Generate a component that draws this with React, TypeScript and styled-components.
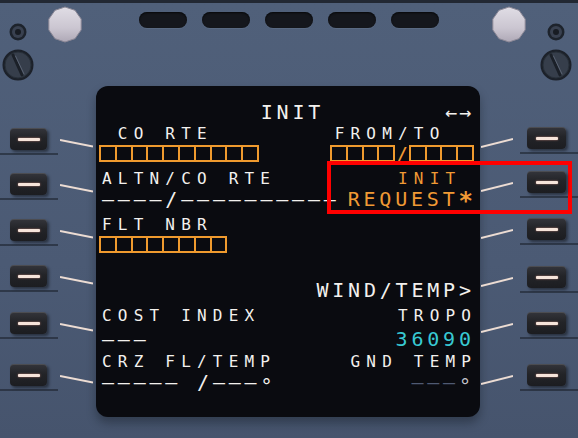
import styled, { createGlobalStyle } from "styled-components";

type Tone = "white" | "amber" | "cyan" | "dim" | "grey";

const TONES: Record<Tone, string> = {
    white: "#f3f1ee",
    amber: "#f09a35",
    cyan: "#38c9d3",
    dim: "#4f5a72",
    grey: "#c4c4cc"
};

const SMALL = { size: 16, spacing: 6.2 };
const LARGE = { size: 20, spacing: 3.8 };

const GlobalStyle = createGlobalStyle`
    html, body {
        margin: 0;
        padding: 0;
        background: #4c5b75;
    }
    body {
        width: 578px;
        height: 438px;
        overflow: hidden;
        font-family: "DejaVu Sans Mono", "Liberation Mono", monospace;
    }
`;

const Panel = styled.div`
    position: relative;
    width: 578px;
    height: 438px;
    display: grid;
    grid-template-columns: 96px 384px 98px;
    grid-template-rows: 86px 331px 21px;
    background: linear-gradient(180deg, #222833 0, #222833 3px, #50607a 3px, #4b5a74 60%, #46546d 100%);
    overflow: hidden;
`;

/* ---------- top hardware ---------- */

const Header = styled.div`
    grid-column: 1 / -1;
    display: grid;
    grid-template-columns: 1fr auto 1fr;
    align-items: start;
`;

const Hardware = styled.div<{ $side: "left" | "right" }>`
    display: flex;
    align-items: flex-start;
    gap: 12px;
    justify-content: ${(p) => (p.$side === "left" ? "flex-start" : "flex-end")};
    padding: ${(p) => (p.$side === "left" ? "0 0 0 1px" : "0 5px 0 0")};
`;

const ScrewStack = styled.div`
    width: 34px;
    display: flex;
    flex-direction: column;
    align-items: center;
    gap: 8px;
    padding-top: 23px;
`;

const NutWrap = styled.div`
    margin-top: 6px;
    width: 36px;
    height: 37px;
`;

const Pills = styled.div`
    display: flex;
    gap: 15px;
    margin-top: 12px;
`;

const Pill = styled.span`
    width: 48px;
    height: 16px;
    border-radius: 8px;
    background: #15171d;
    box-shadow: inset 0 1px 2px rgba(0, 0, 0, 0.7), 0 1px 0 rgba(120, 135, 160, 0.25);
`;

function Nut() {
    const pts = Array.from({ length: 10 }, (_, i) => {
        const a = (Math.PI * 2 * i) / 10 + Math.PI / 10;
        return `${18 + 17 * Math.cos(a)},${18.5 + 17.5 * Math.sin(a)}`;
    }).join(" ");
    return (
        <NutWrap>
            <svg width="36" height="37" viewBox="0 0 36 37">
                <defs>
                    <linearGradient id="nutg" x1="0" y1="0" x2="0" y2="1">
                        <stop offset="0" stopColor="#e0dde5" />
                        <stop offset="0.6" stopColor="#cbc6d1" />
                        <stop offset="1" stopColor="#aea8b6" />
                    </linearGradient>
                </defs>
                <polygon points={pts} fill="url(#nutg)" stroke="#8c8896" strokeWidth="1" strokeLinejoin="round" />
            </svg>
        </NutWrap>
    );
}

function SmallScrew() {
    return (
        <svg width="18" height="18" viewBox="0 0 18 18">
            <circle cx="9" cy="9" r="8.5" fill="#1d232c" />
            <circle cx="9" cy="9" r="6" fill="#394150" />
            <circle cx="9" cy="9" r="3" fill="#181c23" />
        </svg>
    );
}

function Bolt() {
    return (
        <svg width="32" height="32" viewBox="0 0 32 32">
            <circle cx="16" cy="16" r="15.5" fill="#1c212a" />
            <circle cx="16" cy="16" r="13" fill="#363e4b" stroke="#283039" strokeWidth="1" />
            <line x1="11" y1="6" x2="20" y2="26" stroke="#1b2028" strokeWidth="3" strokeLinecap="round" />
            <line x1="13.5" y1="7" x2="22" y2="25" stroke="#5a6373" strokeWidth="1" strokeLinecap="round" />
        </svg>
    );
}

/* ---------- line select keys ---------- */

const KeyColumn = styled.div<{ $side: "left" | "right" }>`
    grid-row: 2;
    grid-column: ${(p) => (p.$side === "left" ? 1 : 3)};
    display: flex;
    flex-direction: column;
`;

const KeyRow = styled.div<{ $side: "left" | "right"; $top: number }>`
    position: relative;
    display: flex;
    align-items: center;
    height: 22px;
    margin-top: ${(p) => p.$top}px;
    gap: ${(p) => (p.$side === "left" ? 13 : 14)}px;
    padding-left: ${(p) => (p.$side === "left" ? 10 : 1)}px;

    &::after {
        content: "";
        position: absolute;
        ${(p) => (p.$side === "left" ? "left: 0;" : "right: 0;")}
        bottom: -5px;
        width: 58px;
        height: 2px;
        background: rgba(24, 29, 38, 0.55);
    }
`;

const Key = styled.span<{ $w: number }>`
    position: relative;
    z-index: 1;
    width: ${(p) => p.$w}px;
    height: 22px;
    border-radius: 4px;
    background: linear-gradient(180deg, #34353b 0%, #232428 45%, #1c1d21 100%);
    box-shadow: inset 0 1px 0 rgba(255, 255, 255, 0.12), 2px 2px 3px rgba(0, 0, 0, 0.45);
    display: flex;
    align-items: center;
    justify-content: center;
`;

const KeyMark = styled.span`
    width: 22px;
    height: 3px;
    border-radius: 1px;
    background: #f6e4da;
    box-shadow: 0 0 2px rgba(255, 170, 150, 0.7);
`;

function Leader({ side }: { side: "left" | "right" }) {
    return side === "left" ? (
        <svg width="33" height="22" viewBox="0 0 33 22">
            <line x1="0" y1="12" x2="33" y2="18.5" stroke="#ecdcd3" strokeWidth="2" />
        </svg>
    ) : (
        <svg width="32" height="22" viewBox="0 0 32 22">
            <line x1="0" y1="20" x2="32" y2="12" stroke="#ecdcd3" strokeWidth="2" />
        </svg>
    );
}

const LEFT_KEYS = [53, 98, 144, 190, 237, 289];
const RIGHT_KEYS = [52, 96, 143, 191, 237, 289];

function Keys({ side }: { side: "left" | "right" }) {
    const centers = side === "left" ? LEFT_KEYS : RIGHT_KEYS;
    return (
        <KeyColumn $side={side}>
            {centers.map((c, i) => (
                <KeyRow key={i} $side={side} $top={i === 0 ? c - 11 : c - centers[i - 1] - 22}>
                    {side === "left" ? (
                        <>
                            <Key $w={37}>
                                <KeyMark />
                            </Key>
                            <Leader side="left" />
                        </>
                    ) : (
                        <>
                            <Leader side="right" />
                            <Key $w={39}>
                                <KeyMark />
                            </Key>
                        </>
                    )}
                </KeyRow>
            ))}
        </KeyColumn>
    );
}

/* ---------- display ---------- */

const Screen = styled.div`
    grid-row: 2;
    grid-column: 2;
    background: #0a0b10;
    border-radius: 12px;
    padding: 16px 9px 0 6px;
    display: flex;
    flex-direction: column;
    box-shadow: 0 6px 10px rgba(12, 16, 24, 0.35);
`;

const Line = styled.div<{ $gap: number }>`
    display: flex;
    justify-content: space-between;
    align-items: center;
    height: 20px;
    margin-top: ${(p) => p.$gap}px;
`;

const TitleLine = styled(Line)`
    display: grid;
    grid-template-columns: 1fr auto 1fr;
`;

const Txt = styled.span<{ $small?: boolean; $tone?: Tone; $end?: boolean }>`
    font-family: "DejaVu Sans Mono", "Liberation Mono", monospace;
    font-size: ${(p) => (p.$small ? SMALL.size : LARGE.size)}px;
    line-height: 20px;
    letter-spacing: ${(p) => (p.$small ? SMALL.spacing : LARGE.spacing)}px;
    margin-right: ${(p) => (p.$end ? -(p.$small ? SMALL.spacing : LARGE.spacing) : 0)}px;
    color: ${(p) => TONES[p.$tone ?? "white"]};
    white-space: pre;
`;

const Title = styled(Txt)`
    grid-column: 2;
    margin-left: 8px;
`;

const Arrows = styled.span`
    grid-column: 3;
    justify-self: end;
    font-size: 20px;
    line-height: 20px;
    letter-spacing: 2px;
    margin-right: -2px;
    color: ${TONES.white};
`;

const Star = styled.span`
    position: relative;
    top: 3px;
    font-size: 24px;
    letter-spacing: 0;
    font-weight: bold;
    margin-right: -2px;
`;

const Degree = styled.span<{ $tone?: Tone }>`
    position: relative;
    top: 4px;
    color: ${(p) => TONES[p.$tone ?? "white"]};
`;

const BoxField = styled.span<{ $edge: "left" | "right" }>`
    display: inline-flex;
    align-items: center;
    margin-left: ${(p) => (p.$edge === "left" ? -3 : 0)}px;
    margin-right: ${(p) => (p.$edge === "right" ? -3 : 0)}px;
`;

const Box = styled.span`
    box-sizing: border-box;
    width: 17.8px;
    height: 17px;
    border: 2px solid #ef9a2e;

    & + & {
        margin-left: -2px;
    }
`;

const BoxSlash = styled.span`
    width: 13.6px;
    text-align: center;
    font-size: 20px;
    line-height: 20px;
    color: ${TONES.amber};
`;

function Boxes({ count }: { count: number }) {
    return (
        <>
            {Array.from({ length: count }, (_, i) => (
                <Box key={i} />
            ))}
        </>
    );
}

const RedFrame = styled.div`
    position: absolute;
    left: 327px;
    top: 161px;
    width: 245px;
    height: 53px;
    box-sizing: border-box;
    border: 4px solid #ff0000;
    pointer-events: none;
`;

export default function App() {
    return (
        <Panel>
            <GlobalStyle />
            <Header>
                <Hardware $side="left">
                    <ScrewStack>
                        <SmallScrew />
                        <Bolt />
                    </ScrewStack>
                    <Nut />
                </Hardware>
                <Pills>
                    {Array.from({ length: 5 }, (_, i) => (
                        <Pill key={i} />
                    ))}
                </Pills>
                <Hardware $side="right">
                    <Nut />
                    <ScrewStack>
                        <SmallScrew />
                        <Bolt />
                    </ScrewStack>
                </Hardware>
            </Header>

            <Keys side="left" />

            <Screen>
                <TitleLine $gap={0}>
                    <Title $end>INIT</Title>
                    <Arrows>←→</Arrows>
                </TitleLine>

                <Line $gap={1.5}>
                    <Txt $small>{" CO RTE"}</Txt>
                    <Txt $small $end>{"FROM/TO  "}</Txt>
                </Line>
                <Line $gap={0}>
                    <BoxField $edge="left">
                        <Boxes count={10} />
                    </BoxField>
                    <BoxField $edge="right">
                        <Boxes count={4} />
                        <BoxSlash>/</BoxSlash>
                        <Boxes count={4} />
                    </BoxField>
                </Line>

                <Line $gap={5}>
                    <Txt $small>ALTN/CO RTE</Txt>
                    <Txt $small $tone="amber" $end>{"INIT "}</Txt>
                </Line>
                <Line $gap={0}>
                    <Txt>––––/––––––––––</Txt>
                    <Txt $tone="amber">
                        REQUEST<Star>*</Star>
                    </Txt>
                </Line>

                <Line $gap={6}>
                    <Txt $small>FLT NBR</Txt>
                </Line>
                <Line $gap={0}>
                    <BoxField $edge="left">
                        <Boxes count={8} />
                    </BoxField>
                </Line>

                <Line $gap={2.5} />
                <Line $gap={3}>
                    <span />
                    <Txt $end>WIND/TEMP&gt;</Txt>
                </Line>

                <Line $gap={6}>
                    <Txt $small>COST INDEX</Txt>
                    <Txt $small $end>TROPO</Txt>
                </Line>
                <Line $gap={3}>
                    <Txt>–––</Txt>
                    <Txt $tone="cyan" $end>36090</Txt>
                </Line>

                <Line $gap={2.5}>
                    <Txt $small>CRZ FL/TEMP</Txt>
                    <Txt $small $end>GND TEMP</Txt>
                </Line>
                <Line $gap={0}>
                    <Txt>
                        ––––– /–––<Degree>°</Degree>
                    </Txt>
                    <Txt $tone="dim" $end>
                        –––<Degree $tone="grey">°</Degree>
                    </Txt>
                </Line>
            </Screen>

            <Keys side="right" />

            <RedFrame />
        </Panel>
    );
}
